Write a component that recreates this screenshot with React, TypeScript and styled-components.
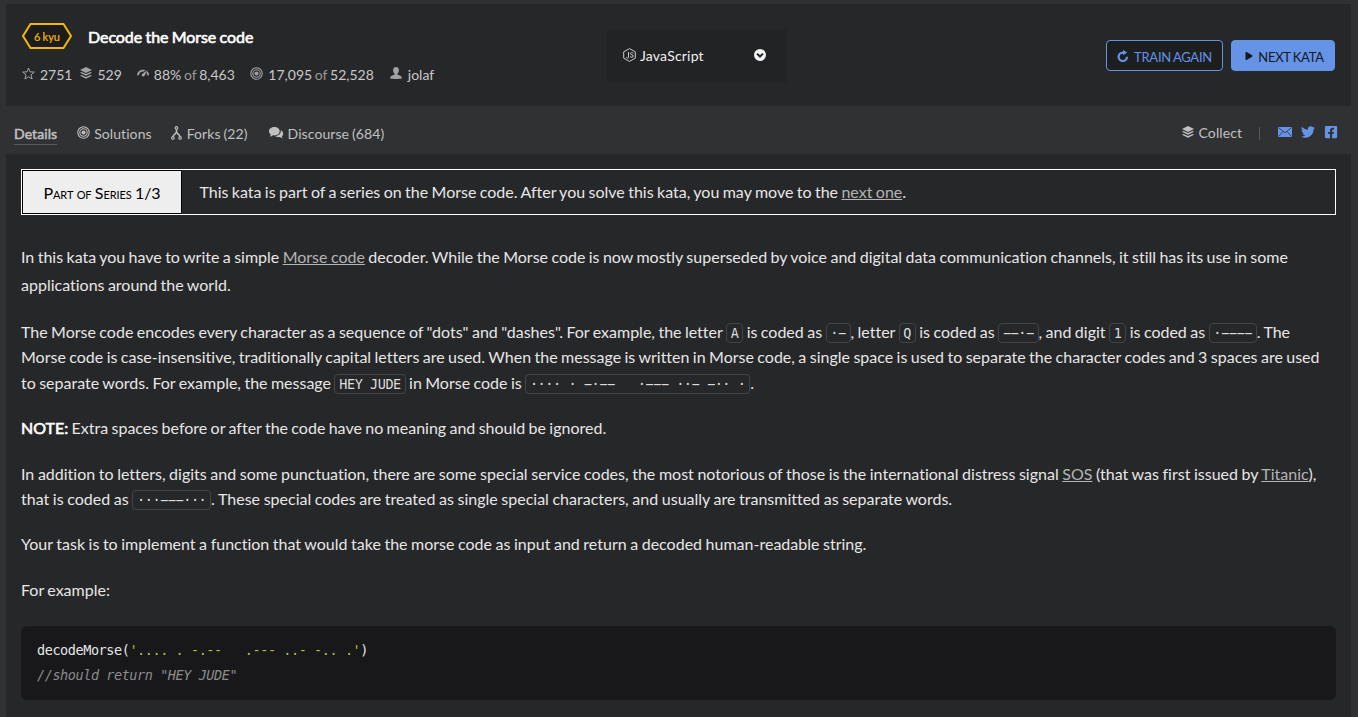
import React from "react";
import styled, { createGlobalStyle, css } from "styled-components";
import { FaTwitter, FaFacebookSquare, FaPlay } from "react-icons/fa";

const sans = `Lato, "Liberation Sans", sans-serif`;
const mono = `"DejaVu Sans Mono", "Liberation Mono", monospace`;
const blue = "#6593e6";
const yellow = "#f4b800";

const GlobalStyle = createGlobalStyle`
  * { box-sizing: border-box; }
  html, body { margin: 0; background: #303133; }
  body {
    font-family: ${sans};
    color: #e6e6e6;
    overflow: hidden;
    font-variant-ligatures: none;
    word-spacing: -0.7px;
  }
`;

const Page = styled.div`
  width: 1358px;
  height: 717px;
  padding: 4px 7px 0 6px;
  display: flex;
  flex-direction: column;
`;

const Header = styled.header`
  height: 102px;
  flex: none;
  background: #262729;
  padding: 16px 16px 0;
  display: grid;
  grid-template-columns: 585px 180px 1fr;
`;

const Summary = styled.div`
  display: flex;
  flex-direction: column;
`;

const TitleRow = styled.div`
  display: flex;
  align-items: center;
  height: 32px;
`;

const Rank = styled.div`
  width: 50px;
  height: 26px;
  display: grid;
  place-items: center;
  margin-right: 16px;
  > * { grid-area: 1 / 1; }
  span {
    font-size: 11px;
    color: ${yellow};
    -webkit-text-stroke: 0.2px ${yellow};
  }
`;

const Title = styled.h1`
  margin: 2px 0 0;
  font-size: 16px;
  font-weight: 400;
  line-height: 24px;
  color: #fff;
  letter-spacing: -0.06px;
  -webkit-text-stroke: 0.6px #fff;
`;

const Stats = styled.div`
  display: flex;
  height: 20px;
  margin-top: 12px;
  align-items: center;
  font-size: 14px;
  word-spacing: -1px;
  color: #c8c8c8;
`;

const Stat = styled.div<{ $gap: number; $inner?: number }>`
  display: flex;
  align-items: center;
  white-space: pre;
  margin-right: ${(p) => p.$gap}px;
  svg { margin-right: ${(p) => p.$inner ?? 5}px; color: #a3a3a3; margin-top: -2px; }
  em { font-style: normal; color: #999; }
`;

const Language = styled.div`
  width: 180px;
  height: 53px;
  margin-top: 9px;
  padding: 0 21px 2px 16px;
  background: #222325;
  display: flex;
  align-items: center;
  font-size: 14px;
  letter-spacing: 0.2px;
  color: #efefef;
  svg:first-child { margin-right: 4px; }
  span { flex: 1; padding-top: 1px; }
`;

const Actions = styled.div`
  display: flex;
  justify-content: flex-end;
  gap: 8px;
  padding-top: 20px;
`;

const Button = styled.button<{ $solid?: boolean }>`
  height: 31px;
  width: ${(p) => (p.$solid ? 104 : 117)}px;
  border: 1px solid ${blue};
  border-radius: 4px;
  display: flex;
  align-items: center;
  justify-content: center;
  gap: 5px;
  padding: 0;
  font-family: ${sans};
  font-size: 13px;
  line-height: 16px;
  letter-spacing: -0.26px;
  word-spacing: -0.7px;
  ${(p) =>
    p.$solid
      ? css`background: ${blue}; color: #15181c; padding-left: 3px;`
      : css`background: #1d1e20; color: ${blue};`}
  span { padding-top: 2px; }
`;

const Tabs = styled.nav`
  height: 48px;
  flex: none;
  display: flex;
  align-items: center;
  padding: 7px 13px 0 8px;
  font-size: 14px;
  letter-spacing: 0.08px;
  color: #c0c0c0;
`;

const Tab = styled.div<{ $active?: boolean; $gap?: number; $inner?: number }>`
  display: flex;
  align-items: center;
  height: 22px;
  margin-right: ${(p) => p.$gap ?? 20}px;
  svg { margin-right: ${(p) => p.$inner ?? 5}px; margin-top: -2px; }
  ${(p) => p.$active && css`
    border-bottom: 1px solid #5a5a5b;
    -webkit-text-stroke: 0.5px #c0c0c0;
  `}
`;

const Share = styled.div`
  margin-left: auto;
  display: flex;
  align-items: center;
  margin-top: -2px;
  > svg { color: ${blue}; margin-left: 9px; margin-top: -2px; }
`;

const Divider = styled.i`
  width: 1px;
  height: 13px;
  background: #58595b;
  margin: 1px 9px 0 -2px;
`;

const Panel = styled.main`
  flex: 1;
  background: #262729;
  padding: 15px 15px 0;
  font-size: 16px;
`;

const Series = styled.section`
  display: flex;
  height: 46px;
  border: 1px solid #fff;
  line-height: 44px;
`;

const SeriesLabel = styled.div`
  width: 160px;
  border: 1px solid #000;
  background: #eee;
  color: #000;
  font-variant-caps: small-caps;
  letter-spacing: -0.08px;
  text-align: center;
  line-height: 44px;
`;

const SeriesText = styled.div`
  padding-left: 17.4px;
`;

const Para = styled.p<{ $top: number; $lh?: number; $space?: number }>`
  margin: ${(p) => p.$top}px 0 0;
  line-height: ${(p) => p.$lh ?? 25.4}px;
  word-spacing: ${(p) => p.$space ?? -0.7}px;
  white-space: nowrap;
  strong { font-weight: 400; color: #fff; -webkit-text-stroke: 0.6px #fff; }
`;

const Link = styled.a`
  color: #b4b4b4;
  text-decoration: underline;
`;

const Code = styled.code`
  font-family: ${mono};
  font-size: 13.5px;
  letter-spacing: -0.43px;
  word-spacing: 0;
  line-height: 16px;
  white-space: pre;
  padding: 1px 3.8px;
  border: 1px solid #434446;
  border-radius: 4px;
  color: #dcdcdc;
`;

const CodeBlock = styled.pre`
  margin: 23.8px 0 0;
  height: 74px;
  padding: 12px 16px;
  border-radius: 6px;
  background: #18181a;
  font-family: ${mono};
  font-size: 13.5px;
  letter-spacing: -0.43px;
  word-spacing: 0;
  line-height: 25px;
  b { font-weight: 400; color: #b5bd43; }
  i { color: #8c8c8c; }
`;

const StarIcon = () => (
  <svg width="13" height="13" viewBox="0 0 13 13" fill="none" stroke="currentColor" strokeWidth="1">
    <path d="M6.5 1 8 4.8 12.3 5.1 9 7.8 10.1 12 6.5 9.7 2.9 12 4 7.8 .7 5.1 5 4.8Z" />
  </svg>
);

const LayersIcon = () => (
  <svg width="12" height="12" viewBox="0 0 12 12" fill="currentColor">
    <path d="M6 0 12 2.9 6 5.9 0 2.9Z" />
    <path d="M1.5 4.9 6 7.1 10.5 4.9 12 5.7 6 8.7 0 5.7Z" />
    <path d="M1.5 7.9 6 10.1 10.5 7.9 12 8.7 6 11.8 0 8.7Z" />
  </svg>
);

const GaugeIcon = () => (
  <svg width="12" height="12" viewBox="0 0 12 12" fill="currentColor">
    <path d="M0 8.3C.3 5 2.8 2.8 6 2.8c.9 0 1.6.1 2.3.4L6.8 4.5C4 4.2 2 5.7 1.9 8.3Z" />
    <path d="M10.3 2.9 7.7 8.4C7.3 9.4 6.3 9.7 5.5 9.3 4.6 8.8 4.5 7.7 5.2 7Z" />
    <path d="M10.4 4.3C11.5 5.3 12 6.6 12 8.3H10.2C10.2 7.3 9.9 6.6 9.4 6.1Z" />
  </svg>
);

const TargetIcon = () => (
  <svg width="13" height="13" viewBox="0 0 13 13" fill="none" stroke="currentColor" strokeWidth="1.1">
    <circle cx="6.5" cy="6.5" r="5.7" />
    <circle cx="6.5" cy="6.5" r="3.7" />
    <circle cx="6.5" cy="6.5" r="2" fill="currentColor" stroke="none" />
  </svg>
);

const UserIcon = () => (
  <svg width="12" height="12" viewBox="0 0 12 12" fill="currentColor">
    <path d="M6 0C7.9 0 8.9 1.3 8.9 3.2 8.9 4.8 8.3 6 7.5 6.6V7.7C9.8 8.1 11.8 8.9 12 11.5 8 12.2 4 12.2 0 11.5 .2 8.9 2.2 8.1 4.5 7.7V6.6C3.7 6 3.1 4.8 3.1 3.2 3.1 1.3 4.1 0 6 0Z" />
  </svg>
);

const ForkIcon = () => (
  <svg width="11" height="14" viewBox="0 0 11 14" fill="none" stroke="currentColor">
    <circle cx="5.5" cy="1.9" r="1.3" strokeWidth="1.1" />
    <circle cx="1.9" cy="11.9" r="1.3" strokeWidth="1.1" />
    <circle cx="9.1" cy="11.9" r="1.3" strokeWidth="1.1" />
    <path d="M5.5 3.5V6.3M5.5 5.6C5.2 8.2 2.6 8 2 10.6M5.5 5.6C5.8 8.2 8.4 8 9 10.6" strokeWidth="1.5" />
  </svg>
);

const BubblesIcon = () => (
  <svg width="15" height="12" viewBox="0 0 15 12" fill="currentColor">
    <path d="M5.4 0C8.4 0 10.7 1.8 10.7 4.2S8.4 8.4 5.4 8.4C4.9 8.4 4.4 8.35 4 8.25 3.1 9.1 2 9.5 .8 9.6 1.4 9 1.7 8.3 1.7 7.4 .7 6.6 0 5.5 0 4.2 0 1.8 2.4 0 5.4 0Z" />
    <path d="M11.7 3.3C13.2 4 14.2 5.2 14.2 6.7 14.2 7.8 13.7 8.6 12.9 9.3 12.9 10 13.2 10.7 13.7 11.2 12.6 11.1 11.6 10.8 10.9 10.1 9.2 10.5 7.3 10.1 6.2 9.1 9.7 8.9 12.4 6.6 11.7 3.3Z" />
  </svg>
);

const NodeIcon = () => (
  <svg width="13" height="14" viewBox="0 0 13 14" fill="none" stroke="#c8c8c8" strokeWidth="1">
    <path d="M6.5 .6 12.3 3.8V10.2L6.5 13.4 .7 10.2V3.8Z" />
    <path d="M5.5 4V9.2C5.5 10.2 4.6 10.3 3.3 9.5M10.3 5.2C9.2 4.3 7.4 4.4 7.4 5.7 7.4 7.2 10.3 6.3 10.3 8 10.3 9.5 8 9.6 7 8.6" />
  </svg>
);

const ChevronIcon = () => (
  <svg width="12" height="12" viewBox="0 0 12 12">
    <circle cx="6" cy="6" r="6" fill="#f5f5f5" />
    <path d="M3 4.6 6 7.5 9 4.6" fill="none" stroke="#222325" strokeWidth="2" />
  </svg>
);

const RedoIcon = () => (
  <svg width="12" height="12" viewBox="0 0 12 12" fill="none" stroke="currentColor" strokeWidth="2.2">
    <path d="M6.4 2.6H5.8A4.2 4.2 0 1 0 10 6.8" />
    <path d="M6 0V5.2L10.3 2.6Z" fill="currentColor" stroke="none" />
  </svg>
);

const MailIcon = () => (
  <svg width="14" height="10" viewBox="0 0 14 10">
    <path d="M0 0H14V10H0Z" fill="currentColor" />
    <path d="M.5 .6 7 5.8 13.5 .6M.5 9.5 5 4.5M13.5 9.5 9 4.5" fill="none" stroke="#303133" strokeWidth=".8" />
  </svg>
);

export default function App() {
  return (
    <>
      <GlobalStyle />
      <Page>
        <Header>
          <Summary>
            <TitleRow>
              <Rank>
                <svg width="50" height="26" viewBox="0 0 50 26">
                  <path d="M8.5 1H41.5L49 13 41.5 25H8.5L1 13Z" fill="#1b1c1d" stroke={yellow} strokeWidth="2" />
                </svg>
                <span>6 kyu</span>
              </Rank>
              <Title>Decode the Morse code</Title>
            </TitleRow>
            <Stats>
              <Stat $gap={8}><StarIcon />2751</Stat>
              <Stat $gap={15}><LayersIcon />529</Stat>
              <Stat $gap={15.5}><GaugeIcon />88% <em>of</em> 8,463</Stat>
              <Stat $gap={16}><TargetIcon />17,095 <em>of</em> 52,528</Stat>
              <Stat $gap={0} $inner={6}><UserIcon />jolaf</Stat>
            </Stats>
          </Summary>
          <Language>
            <NodeIcon />
            <span>JavaScript</span>
            <ChevronIcon />
          </Language>
          <Actions>
            <Button><RedoIcon /><span>TRAIN AGAIN</span></Button>
            <Button $solid><FaPlay size={8} /><span>NEXT KATA</span></Button>
          </Actions>
        </Header>
        <Tabs>
          <Tab $active>Details</Tab>
          <Tab $gap={19} $inner={4}><TargetIcon />Solutions</Tab>
          <Tab $gap={21}><ForkIcon />Forks (22)</Tab>
          <Tab $inner={4}><BubblesIcon />Discourse (684)</Tab>
          <Share>
            <Tab $gap={19}><LayersIcon />Collect</Tab>
            <Divider />
            <MailIcon />
            <FaTwitter size={14} />
            <FaFacebookSquare size={14} />
          </Share>
        </Tabs>
        <Panel>
          <Series>
            <SeriesLabel>Part of Series 1/3</SeriesLabel>
            <SeriesText>
              This kata is part of a series on the Morse code. After you solve this kata, you may move to the <Link>next one</Link>.
            </SeriesText>
          </Series>
          <Para $top={28} $lh={28}>
            In this kata you have to write a simple <Link>Morse code</Link> decoder. While the Morse code is now mostly superseded by voice and digital data communication channels, it still has its use in some<br />
            applications around the world.
          </Para>
          <Para $top={20} $space={-0.67}>
            The Morse code encodes every character as a sequence of "dots" and "dashes". For example, the letter <Code>A</Code> is coded as <Code>·−</Code>, letter <Code>Q</Code> is coded as <Code>−−·−</Code>, and digit <Code>1</Code> is coded as <Code>·−−−−</Code>. The<br />
            Morse code is case-insensitive, traditionally capital letters are used. When the message is written in Morse code, a single space is used to separate the character codes and 3 spaces are used<br />
            to separate words. For example, the message <Code>HEY JUDE</Code> in Morse code is <Code>{"···· · −·−−   ·−−− ··− −·· ·"}</Code>.
          </Para>
          <Para $top={20} $space={-0.75}>
            <strong>NOTE:</strong> Extra spaces before or after the code have no meaning and should be ignored.
          </Para>
          <Para $top={20} $space={-0.5}>
            In addition to letters, digits and some punctuation, there are some special service codes, the most notorious of those is the international distress signal <Link>SOS</Link> (that was first issued by <Link>Titanic</Link>),<br />
            that is coded as <Code>···−−−···</Code>. These special codes are treated as single special characters, and usually are transmitted as separate words.
          </Para>
          <Para $top={20} $space={-0.54}>
            Your task is to implement a function that would take the morse code as input and return a decoded human-readable string.
          </Para>
          <Para $top={20}>For example:</Para>
          <CodeBlock>
            decodeMorse(<b>{"'.... . -.--   .--- ..- -.. .'"}</b>){"\n"}
            <i>//should return "HEY JUDE"</i>
          </CodeBlock>
        </Panel>
      </Page>
    </>
  );
}
